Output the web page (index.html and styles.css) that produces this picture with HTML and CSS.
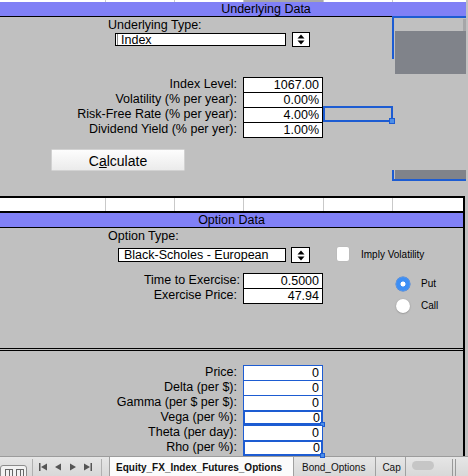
FILE: index.html
```html
<!DOCTYPE html>
<html>
<head>
<meta charset="utf-8">
<link rel="stylesheet" href="styles.css">
</head>
<body>
<div class="cells toprow"><span></span><span></span><span></span><span class="hl"></span><span></span><span></span></div>

<section class="under">
  <div class="hdr hdr-under">Underlying Data</div>
  <div class="pbody under-body">
    <div class="type-label">Underlying Type:</div>
    <div class="select-row sr-under">
      <div class="select sel-under">Index</div>
      <div class="spin spin-under"><svg width="8" height="11" viewBox="0 0 8 11"><path d="M4 0.5L7.5 4.5H0.5Z M0.5 6.5H7.5L4 10.5Z" fill="#000"/></svg></div>
    </div>
    <div class="fields f-under">
      <div class="frow"><div class="flabel">Index Level:</div><div class="fbox">1067.00</div></div>
      <div class="frow"><div class="flabel">Volatility (% per year):</div><div class="fbox">0.00%</div></div>
      <div class="frow"><div class="flabel">Risk-Free Rate (% per year):</div><div class="fbox">4.00%</div></div>
      <div class="frow"><div class="flabel">Dividend Yield (% per yer):</div><div class="fbox">1.00%</div></div>
    </div>
    <button class="calc">C<u>a</u>lculate</button>

    <div class="deco blue-top"></div>
    <div class="deco blue-left"></div>
    <div class="deco strip"></div>
    <div class="deco dark-rect"></div>
    <div class="deco sel-rect"><span class="handle"></span></div>
    <div class="deco dark-bar"></div>
    <div class="deco blue-left2"></div>
    <div class="deco blue-bottom"></div>
  </div>
</section>

<div class="cells gridrow"><span></span><span></span><span></span><span></span><span></span><span></span></div>

<div class="lower">
  <section class="option">
    <div class="hdr">Option Data</div>
    <div class="pbody opt-body">
      <div class="type-label">Option Type:</div>
      <div class="select-row sr-opt">
        <div class="select sel-opt">Black-Scholes - European</div>
        <div class="spin spin-opt"><svg width="8" height="11" viewBox="0 0 8 11"><path d="M4 0.5L7.5 4.5H0.5Z M0.5 6.5H7.5L4 10.5Z" fill="#000"/></svg></div>
        <div class="checkbox"></div>
        <div class="small-label imply">Imply Volatility</div>
      </div>
      <div class="opt-main">
        <div class="fields">
          <div class="frow"><div class="flabel lbl-time">Time to Exercise:</div><div class="fbox">0.5000</div></div>
          <div class="frow"><div class="flabel">Exercise Price:</div><div class="fbox">47.94</div></div>
        </div>
        <div class="radios">
          <div class="rrow"><span class="radio on"></span><span class="small-label">Put</span></div>
          <div class="rrow"><span class="radio off"></span><span class="small-label">Call</span></div>
        </div>
      </div>
    </div>
  </section>
  <div class="dbl"></div>
  <section class="results">
    <div class="fields">
      <div class="frow"><div class="flabel">Price:</div><div class="fbox rbox">0</div></div>
      <div class="frow"><div class="flabel">Delta (per $):</div><div class="fbox rbox">0</div></div>
      <div class="frow"><div class="flabel">Gamma (per $ per $):</div><div class="fbox rbox">0</div></div>
      <div class="frow"><div class="flabel">Vega (per %):</div><div class="fbox rbox sel">0<span class="handle"></span></div></div>
      <div class="frow"><div class="flabel">Theta (per day):</div><div class="fbox rbox">0</div></div>
      <div class="frow"><div class="flabel">Rho (per %):</div><div class="fbox rbox sel last">0<span class="handle"></span></div></div>
    </div>
  </section>
</div>

<div class="tabbar">
  <div class="viewbtn"><span class="vicon"></span><span class="vicon"></span></div>
  <div class="sep"></div>
  <div class="nav">
    <svg width="56" height="10" viewBox="0 0 56 10">
      <rect x="1" y="1" width="1.5" height="8" fill="#555"/>
      <path d="M3 5L9 1.5V8.5Z" fill="#555"/>
      <path d="M17 5L23 1.5V8.5Z" fill="#555"/>
      <path d="M38 5L32 1.5V8.5Z" fill="#555"/>
      <path d="M52 5L46 1.5V8.5Z" fill="#555"/>
      <rect x="52.5" y="1" width="1.5" height="8" fill="#555"/>
    </svg>
  </div>
  <div class="sep"></div>
  <div class="tab active">Equity_FX_Index_Futures_Options</div>
  <div class="tab">Bond_Options</div>
  <div class="tab cap">Cap</div>
  <div class="hscroll"><span class="thumb"></span></div>
  <div class="grip"></div>
</div>
</body>
</html>
```
FILE: styles.css
```css
* { box-sizing: border-box; }
html, body { margin: 0; padding: 0; }
body {
  width: 468px;
  height: 476px;
  overflow: hidden;
  background: #c0c0c0;
  font-family: "Liberation Sans", Arial, sans-serif;
  font-size: 12.5px;
  color: #000;
}

/* spreadsheet cell rows */
.cells {
  display: grid;
  grid-template-columns: 105px 69px 69px 80px 69px 1fr;
  background: #fff;
}
.cells span + span { border-left: 1px solid #c9c9c9; }
.toprow { height: 2px; width: 466px; }
.toprow .hl { background: #a9a9a9; }
.gridrow {
  height: 17px;
  width: 465px;
  border-top: 2px solid #000;
  border-bottom: 2px solid #000;
  border-right: 2px solid #000;
}

/* headers */
.hdr {
  height: 15px;
  background: #8080f6;
  border-bottom: 1px solid #000;
  text-align: center;
  line-height: 15px;
  font-size: 12.5px;
}
.hdr-under { padding-left: 66px; }

.under { width: 466px; }
.pbody { position: relative; }
.under-body { height: 179px; }

.type-label {
  margin-left: 108px;
  padding-top: 1px;
  height: 15px;
  line-height: 14px;
}

.select-row { display: flex; align-items: flex-start; }
.sr-under { margin-left: 115px; height: 15px; }
.sr-opt { margin-left: 118px; height: 16px; margin-top: 4px; }

.select {
  background: #fff;
  border: 1px solid #000;
  margin-top: 1px;
  white-space: nowrap;
  overflow: hidden;
}
.sel-under {
  width: 171px;
  height: 13px;
  line-height: 12px;
  padding-left: 5px;
  box-shadow: inset 1px 0 0 #fff, inset 2px 0 0 #8a8a8a;
}
.sel-opt {
  width: 168px;
  height: 14px;
  line-height: 13px;
  padding-left: 5px;
}

.spin {
  background: #fff;
  border: 1px solid #000;
  display: flex;
  align-items: center;
  justify-content: center;
}
.spin-under { width: 18px; height: 15px; margin-left: 6px; }
.spin-opt { width: 19px; height: 16px; margin-left: 5px; }

.checkbox {
  width: 12px;
  height: 14px;
  margin-left: 27px;
  background: #fff;
  border-radius: 2px;
  box-shadow: 0 0 0 0.5px #b8b8b8;
}
.small-label { font-size: 10px; line-height: 14px; }
.imply { margin-left: 12px; line-height: 16px; }

/* field rows */
.fields { display: flex; flex-direction: column; }
.f-under { margin-top: 30px; }
.frow { display: flex; height: 15px; }
.flabel {
  width: 243px;
  text-align: right;
  padding-right: 6px;
  line-height: 15px;
  white-space: nowrap;
}
.lbl-time { padding-right: 3px; }
.fbox {
  position: relative;
  width: 80px;
  height: 15px;
  background: #fff;
  border: 1px solid #000;
  border-bottom: none;
  text-align: right;
  padding-right: 3px;
  line-height: 14px;
}
.frow:last-child .fbox { height: 16px; border-bottom: 1px solid #000; }

.calc {
  display: block;
  margin: 12px 0 0 51px;
  width: 134px;
  height: 22px;
  padding: 0;
  border: 1px solid #d2d2d2;
  border-radius: 1px;
  background: linear-gradient(#fdfdfd, #ebebeb);
  font-family: "Liberation Sans", Arial, sans-serif;
  font-size: 14px;
  color: #000;
  line-height: 22px;
}

/* overlays on the top panel (selection marks / embedded graphics) */
.deco { position: absolute; }
.blue-top { left: 392px; top: -1px; width: 74px; height: 2px; background: #1d5cd2; }
.blue-left { left: 392px; top: -1px; width: 2px; height: 43px; background: #1d5cd2; }
.strip { left: 463px; top: 2px; width: 3px; height: 12px; background: #a6a6a8; }
.dark-rect { left: 395px; top: 14px; width: 71px; height: 43px; background: #80838a; }
.dark-bar { left: 395px; top: 153px; width: 71px; height: 9px; background: #80838a; }
.blue-left2 { left: 392px; top: 153px; width: 2px; height: 11px; background: #1d5cd2; }
.blue-bottom { left: 392px; top: 162px; width: 74px; height: 2px; background: #1d5cd2; }
.sel-rect {
  left: 323px; top: 89px; width: 70px; height: 16px;
  border: 2px solid #1d5cd2;
}
.handle {
  position: absolute;
  right: -4px;
  bottom: -4px;
  width: 6px;
  height: 6px;
  background: #4d8fe8;
  border: 1px solid #1d5cd2;
}

/* lower panel */
.lower { width: 465px; border-right: 2px solid #000; }
.opt-body { height: 120px; }
.opt-main { display: flex; margin-top: 10px; }
.radios { margin-left: 73px; margin-top: 4px; display: flex; flex-direction: column; gap: 8px; }
.rrow { display: flex; align-items: center; gap: 11px; height: 14px; }
.radio { width: 14px; height: 14px; border-radius: 50%; display: inline-block; }
.radio.on {
  background: radial-gradient(circle, #fff 0 2.2px, #3d8ef4 2.8px);
  box-shadow: 0 0 0 0.5px #2d74dc;
}
.radio.off {
  background: #fff;
  box-shadow: 0 0.5px 1.5px rgba(0,0,0,0.35);
}

.dbl { height: 3px; border-top: 1px solid #000; border-bottom: 1px solid #000; }
.results { height: 105px; padding-top: 14px; }
.rbox { border-color: #1d5cd2; }
.frow:last-child .rbox { border-bottom-color: #1d5cd2; }
.rbox.sel { box-shadow: inset 0 0 0 1px #1d5cd2; border-bottom: 1px solid #1d5cd2; padding-right: 2px; }
.rbox .handle { right: -3px; bottom: -3px; width: 5px; height: 5px; }

/* sheet tabs */
.tabbar {
  height: 20px;
  display: flex;
  background: linear-gradient(#e6e6e6, #d8d8d8);
  border-top: 1px solid #9c9c9c;
  font-size: 10px;
  overflow: hidden;
}
.viewbtn {
  width: 27px;
  height: 14px;
  margin-top: 8px;
  border: 1px solid #8c8c8c;
  border-radius: 3px;
  background: #f2f2f2;
  display: flex;
  gap: 3px;
  padding: 3px 0 0 4px;
}
.vicon { width: 8px; height: 8px; border: 1px solid #666; background: linear-gradient(90deg, transparent 3px, #666 3px 4px, transparent 4px); }
.sep { width: 1px; background: #b0b0b0; margin: 2px 3px 0 5px; }
.nav { width: 60px; padding: 5px 0 0 2px; }
.tab {
  padding: 3px 10px 0 8px;
  line-height: 15px;
  border-right: 1px solid #a0a0a0;
  white-space: nowrap;
  color: #111;
}
.tab.active {
  margin-left: 4px;
  width: 185px;
  background: #fbfbfb;
  font-weight: bold;
  padding-left: 6px;
  border-left: 1px solid #a0a0a0;
}
.tab.cap { width: 30px; overflow: hidden; padding-left: 6px; padding-right: 0; }
.hscroll { width: 44px; padding: 4px 0 0 6px; }
.thumb { display: block; width: 22px; height: 9px; border-radius: 5px; background: #c6c6c6; }
.grip { width: 4px; margin: 2px 0 0 2px; border-left: 1px solid #999; border-right: 1px solid #999; }
```
